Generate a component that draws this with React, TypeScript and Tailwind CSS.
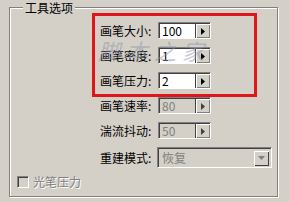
import React from "react";

const font = { fontFamily: '"Noto Sans CJK SC", "Noto Sans", sans-serif' };

function Arrow({ disabled }: { disabled?: boolean }) {
  return (
    <svg width="4" height="7" viewBox="0 0 4 7">
      <path d="M0 0 L4 3.5 L0 7 Z" fill={disabled ? "#404040" : "#000"} />
    </svg>
  );
}

function Spin({ value, disabled }: { value: string; disabled?: boolean }) {
  return (
    <div className="flex h-[17px] w-[53px] border-t border-l border-[#808080] border-b-white border-r-white border-b border-r">
      <div
        className={`flex h-full w-[36px] items-center border-t border-l border-[#404040] pl-[2px] text-[12px] leading-none ${
          disabled ? "bg-[#D4D0C8] text-[#808080]" : "bg-white text-black"
        }`}
      >
        {value}
      </div>
      <div className="flex h-full flex-1 items-center justify-center border-t border-l border-[#404040] bg-[#D4D0C8] shadow-[inset_1px_1px_0_#fff,inset_-1px_-1px_0_#808080]">
        <Arrow disabled={disabled} />
      </div>
    </div>
  );
}

function Row({ label, value, disabled }: { label: string; value: string; disabled?: boolean }) {
  return (
    <div className="flex h-[17px] items-center">
      <div className="w-[58px] text-[12px] leading-none text-black">{label}</div>
      <Spin value={value} disabled={disabled} />
    </div>
  );
}

export default function App() {
  return (
    <div className="relative h-[202px] w-[289px] overflow-hidden bg-[#D4D0C8] pl-[9px] pt-[7px]" style={font}>
      <div className="relative h-[190px] w-[269px] border border-[#808080] shadow-[inset_1px_1px_0_#fff,1px_1px_0_#fff]">
        <div className="absolute left-[13px] top-[-7px] bg-[#D4D0C8] px-[2px] text-[12px] leading-[13px] text-black">
          工具选项
        </div>

        <div className="ml-[82px] mt-[5px] flex h-[84px] w-[165px] flex-col gap-[8px] border-[3px] border-[#E0161B] pl-[5px] pt-[6px]">
          <Row label="画笔大小:" value="100" />
          <Row label="画笔密度:" value="1" />
          <Row label="画笔压力:" value="2" />
        </div>

        <div className="ml-[90px] flex flex-col gap-[8px]">
          <Row label="画笔速率:" value="80" disabled />
          <Row label="湍流抖动:" value="50" disabled />
          <div className="flex h-[21px] items-center">
            <div className="w-[57px] text-[12px] leading-none text-black">重建模式:</div>
            <div className="flex h-[21px] w-[115px] border-t border-l border-[#808080] border-b border-r border-b-white border-r-white">
              <div className="flex h-full flex-1 items-center border-t border-l border-[#404040] bg-[#D4D0C8] pl-[3px] pr-[2px] text-[12px] leading-none text-[#808080]">
                <span className="flex-1">恢复</span>
                <div className="flex h-[15px] w-[15px] items-center justify-center bg-[#D4D0C8] shadow-[inset_1px_1px_0_#fff,inset_-1px_-1px_0_#404040]">
                  <svg width="7" height="4" viewBox="0 0 7 4">
                    <path d="M0 0 L7 0 L3.5 4 Z" fill="#808080" />
                  </svg>
                </div>
              </div>
            </div>
          </div>
        </div>

        <div className="ml-[7px] mt-[8px] flex items-center gap-[4px]">
          <div className="h-[12px] w-[12px] border-t border-l border-[#808080] border-b border-r border-b-white border-r-white">
            <div className="h-full w-full border-t border-l border-[#404040] bg-[#D4D0C8]" />
          </div>
          <span className="text-[12px] leading-none text-[#808080] [text-shadow:1px_1px_0_#fff]">光笔压力</span>
        </div>

        <div className="pointer-events-none absolute left-[88px] top-[31px] text-[22px] italic leading-none tracking-[6px] text-[#8f95a8] opacity-50">
          脚本之家
        </div>
      </div>
    </div>
  );
}
